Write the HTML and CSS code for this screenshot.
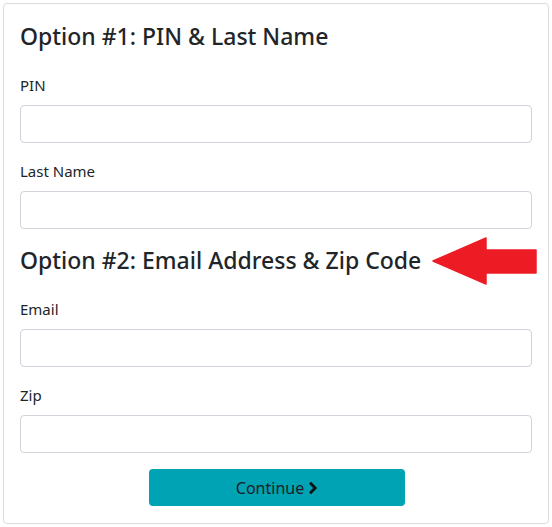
FILE: index.html
```html
<!DOCTYPE html>
<html>
<head>
<meta charset="utf-8">
<link rel="stylesheet" href="styles.css">
</head>
<body>
<div class="card">
  <h4 class="title">Option #1: PIN &amp; Last Name</h4>
  <div class="group">
    <label class="lbl">PIN</label>
    <input class="field" type="text">
  </div>
  <div class="group">
    <label class="lbl">Last Name</label>
    <input class="field" type="text">
  </div>
  <h4 class="title">Option #2: Email Address &amp; Zip Code</h4>
  <div class="group">
    <label class="lbl">Email</label>
    <input class="field" type="text">
  </div>
  <div class="group">
    <label class="lbl">Zip</label>
    <input class="field" type="text">
  </div>
  <div class="actions">
    <button class="btn" type="button">Continue <svg class="chev" width="10" height="14" viewBox="0 0 10 14"><path d="M2 1.8 L7.2 7 L2 12.2" fill="none" stroke="#111" stroke-width="2.8" stroke-linejoin="miter"/></svg></button>
  </div>
  <svg class="arrow" width="106" height="49" viewBox="0 0 106 49"><polygon points="1,24 54,1 54,13 104,13 104,36 54,36 54,47" fill="#ed1c24" stroke="#ed1c24" stroke-width="1.5" stroke-linejoin="round"/></svg>
</div>
</body>
</html>
```
FILE: styles.css
```css
* { box-sizing: border-box; }
body {
  margin: 0;
  background: #fff;
  font-family: "Noto Sans", "Open Sans", sans-serif;
  color: #212529;
}
.card {
  position: relative;
  margin: 3px;
  width: 546px;
  height: 521px;
  border: 1px solid #dcdcdc;
  border-radius: 4px;
  padding: 16px;
  display: flex;
  flex-direction: column;
}
.title {
  margin: 0 0 21px 0;
  padding-top: 2px;
  font-size: 23px;
  line-height: 29px;
  font-weight: 500;
  color: #212529;
}
.group {
  display: flex;
  flex-direction: column;
  margin-bottom: 15px;
}
.lbl {
  font-size: 15px;
  line-height: 24px;
  padding-top: 1px;
  margin-bottom: 8px;
}
.field {
  height: 38px;
  width: 100%;
  border: 1px solid #ced4da;
  border-radius: 4px;
  background: #fff;
  font: inherit;
  padding: 6px 12px;
}
.actions {
  display: flex;
  justify-content: center;
  margin-top: 1px;
}
.btn {
  width: 256px;
  height: 37px;
  margin-left: 2px;
  background: #00a3b4;
  border: none;
  border-radius: 4px;
  font-family: inherit;
  font-size: 16px;
  color: #1a1d21;
  display: flex;
  align-items: center;
  justify-content: center;
  gap: 4px;
  padding: 0;
}
.chev { display: block; margin-top: 1px; }
.arrow {
  position: absolute;
  left: 428px;
  top: 233px;
}
```
